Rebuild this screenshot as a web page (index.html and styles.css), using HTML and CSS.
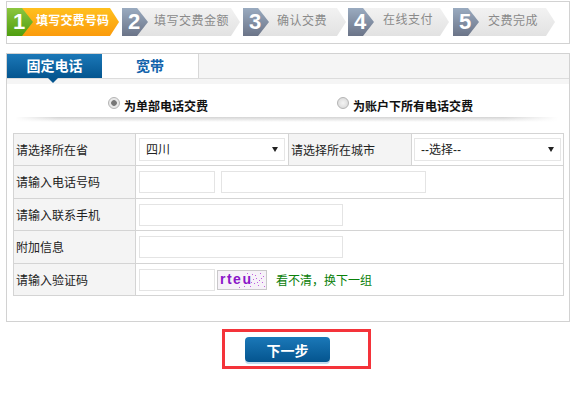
FILE: index.html
```html
<!DOCTYPE html>
<html>
  <head>
    <meta charset="utf-8" />
    <title>交费</title>
    <link rel="stylesheet" href="styles.css">
  </head>
  <body>
    <div class="steps">
      <div class="step step-active step-1"><span class="step-num">1</span><span class="step-label">填写交费号码</span></div>
      <div class="step step-2"><span class="step-num">2</span><span class="step-label">填写交费金额</span></div>
      <div class="step step-3"><span class="step-num">3</span><span class="step-label">确认交费</span></div>
      <div class="step step-4"><span class="step-num">4</span><span class="step-label">在线支付</span></div>
      <div class="step step-5"><span class="step-num">5</span><span class="step-label">交费完成</span></div>
    </div>

    <div class="panel">
      <div class="tabs">
        <div class="tab tab-active">固定电话</div>
        <div class="tab">宽带</div>
      </div>

      <div class="radio-row">
        <label class="radio-item radio-first"><span class="radio radio-on"></span>为单部电话交费</label>
        <label class="radio-item radio-second"><span class="radio"></span>为账户下所有电话交费</label>
      </div>
      <div class="radio-shadow"></div>

      <table class="form-table">
        <tr>
          <td class="label col-a">请选择所在省</td>
          <td class="col-b">
            <div class="select-wrap"><select class="select"><option>四川</option></select></div>
          </td>
          <td class="label col-c">请选择所在城市</td>
          <td class="col-d">
            <div class="select-wrap"><select class="select"><option>--选择--</option></select></div>
          </td>
        </tr>
        <tr class="row-tall">
          <td class="label">请输入电话号码</td>
          <td colspan="3"><input class="input input-s"><input class="input input-m"></td>
        </tr>
        <tr>
          <td class="label">请输入联系手机</td>
          <td colspan="3"><input class="input input-l"></td>
        </tr>
        <tr class="row-tall">
          <td class="label">附加信息</td>
          <td colspan="3"><input class="input input-l"></td>
        </tr>
        <tr>
          <td class="label">请输入验证码</td>
          <td colspan="3">
            <div class="captcha-row">
              <input class="input input-s">
              <svg class="captcha" width="50" height="20" viewBox="0 0 50 20">
                <rect x="0.5" y="0.5" width="49" height="19" fill="#f6f2f8" stroke="#999" stroke-dasharray="1 1" />
                <text x="3" y="14" class="captcha-text">rteu</text>
                <g fill="#c060e0">
                  <rect x="35" y="4" width="1" height="1" /><rect x="39" y="8" width="1" height="1" />
                  <rect x="43" y="3" width="1" height="1" /><rect x="46" y="6" width="1" height="1" />
                  <rect x="37" y="13" width="1" height="1" /><rect x="41" y="15" width="1" height="1" />
                  <rect x="45" y="12" width="1" height="1" /><rect x="33" y="16" width="1" height="1" />
                  <rect x="42" y="10" width="1" height="1" /><rect x="47" y="16" width="1" height="1" />
                  <rect x="36" y="9" width="1" height="1" /><rect x="30" y="3" width="1" height="1" />
                  <rect x="38" y="5" width="1" height="1" /><rect x="44" y="8" width="1" height="1" />
                  <rect x="34" y="12" width="1" height="1" /><rect x="40" y="12" width="1" height="1" />
                  <rect x="27" y="16" width="1" height="1" /><rect x="22" y="17" width="1" height="1" />
                </g>
              </svg>
              <a class="refresh">看不清，换下一组</a>
            </div>
          </td>
        </tr>
      </table>
    </div>

    <div class="actions">
      <div class="highlight">
        <button class="next-btn">下一步</button>
      </div>
    </div>
  </body>
</html>
```

FILE: styles.css
```css
body {
  margin: 0;
  font-family: "Liberation Sans", "Noto Sans CJK SC", sans-serif;
  font-size: 12px;
  color: #222;
  background: #fff;
}

/* step bar */
.steps {
  display: flex;
  width: 564px;
  height: 43px;
  margin: 1px 0 0 6px;
  padding-top: 6px;
  box-sizing: border-box;
  border: 1px solid #d2d2d2;
}

.step {
  display: flex;
  height: 28px;
}
.step-1 { width: 112px; }
.step-2 { width: 118px; margin-left: 3px; }
.step-3 { width: 103px; margin-left: 3px; }
.step-4 { width: 101px; margin-left: 2px; }
.step-5 { width: 102px; margin-left: 4px; }

.step-num {
  position: relative;
  z-index: 1;
  flex: none;
  width: 26px;
  padding-right: 2px;
  box-sizing: border-box;
  text-align: center;
  font: bold 22px/28px "Liberation Sans", sans-serif;
  color: #fff;
  background: linear-gradient(#9aabc0, #6b7488);
  clip-path: polygon(0 0, 15px 0, 26px 50%, 15px 100%, 0 100%);
}

.step-label {
  flex: 1;
  margin-left: -14px;
  line-height: 27px;
  letter-spacing: 0.5px;
  color: #8a8a8a;
  background: linear-gradient(#f2f2f2, #e2e2e2);
  clip-path: polygon(0 0, calc(100% - 9px) 0, 100% 50%, calc(100% - 9px) 100%, 0 100%);
}
.step-2 .step-label { padding-left: 20px; }
.step-3 .step-label { padding-left: 22px; }
.step-4 .step-label { padding-left: 23px; line-height: 24px; }
.step-5 .step-label { padding-left: 23px; }

.step-active .step-num {
  background: linear-gradient(#8cc63f, #4f9e10);
}
.step-active .step-label {
  padding-left: 17px;
  letter-spacing: 0.2px;
  font-weight: bold;
  color: #fff;
  background: linear-gradient(#ffc01e, #fb9b0c);
}

/* tabbed panel */
.panel {
  width: 562px;
  height: 267px;
  margin: 9px 0 0 6px;
  border: 1px solid #d2d2d2;
}

.tabs {
  display: flex;
  height: 24px;
  background: #f5f5f5;
  border-bottom: 1px solid #dcdcdc;
}

.tab {
  position: relative;
  width: 96px;
  text-align: center;
  font-size: 14px;
  font-weight: bold;
  line-height: 25px;
  color: #1464ac;
  background: #fff;
  border-right: 1px solid #d8d8d8;
}

.tab-active {
  width: 95px;
  color: #fff;
  background: linear-gradient(#1b78b8, #04558f);
  border-right: 0;
}
.tab-active::after {
  content: "";
  position: absolute;
  left: 41px;
  top: 24px;
  border: 5px solid transparent;
  border-top-color: #04558f;
  border-bottom: 0;
}

.radio-row {
  display: flex;
  height: 38px;
  padding-top: 5px;
  box-sizing: border-box;
  background: linear-gradient(#f5f5f5 5px, #fff 5px);
  font-weight: bold;
  color: #111;
}

.radio-item {
  display: flex;
  align-items: center;
  padding-top: 10px;
}
.radio-first { margin-left: 101px; }
.radio-second { margin-left: 129px; }

.radio {
  width: 12px;
  height: 12px;
  margin: -6px 4px 0 0;
  box-sizing: border-box;
  border: 1px solid #b4b4b4;
  border-radius: 50%;
  background: radial-gradient(#f4f4f4, #d4d4d4);
}
.radio-on {
  background: radial-gradient(#777 35%, #e8e8e8 45%);
}

.radio-shadow {
  height: 5px;
  margin: 0 11px 0 8px;
  background:
    linear-gradient(90deg, #fff, transparent 8%, transparent 90%, #fff),
    linear-gradient(#d4d4d4, #fff);
}

.form-table {
  width: 551px;
  margin: 11px 0 0 6px;
  table-layout: fixed;
  border-collapse: collapse;
  border: 1px solid #d4d4d4;
}

.form-table td {
  height: 32px;
  padding: 0 3px;
  box-sizing: border-box;
  border: 1px solid #d4d4d4;
}
.form-table .row-tall td {
  height: 33px;
}

.form-table .label {
  padding: 2px 2px 0;
  background: #f4f4f4;
  line-height: 16px;
}

.col-a { width: 122px; }
.col-b { width: 153px; }
.col-c { width: 123px; }
.form-table .col-d { padding: 0 2px; }

.select-wrap {
  position: relative;
}
.select-wrap::after {
  content: "";
  position: absolute;
  right: 7px;
  top: 9px;
  border: 3px solid transparent;
  border-top: 5px solid #222;
  border-bottom: 0;
}

.select {
  display: block;
  width: 100%;
  height: 23px;
  padding: 0 6px;
  box-sizing: border-box;
  font: inherit;
  color: #222;
  background: #fff;
  border: 1px solid #e6e6e6;
  border-radius: 0;
  appearance: none;
}

.input {
  display: inline-block;
  height: 22px;
  margin: 0;
  padding: 0 4px;
  box-sizing: border-box;
  vertical-align: middle;
  background: #fff;
  border: 1px solid #e4e4e4;
}
.input-s { width: 76px; }
.input-m { width: 205px; margin-left: 6px; }
.input-l { width: 204px; }

.captcha-row {
  display: flex;
  align-items: center;
}

.captcha {
  margin: 0 9px 0 2px;
}
.captcha-text {
  font: bold 14px "Liberation Sans", sans-serif;
  letter-spacing: 1.5px;
  fill: #8a16c8;
}

.refresh {
  color: #0a800a;
}

/* next button */
.actions {
  display: flex;
  margin: 7px 0 0 222px;
}

.highlight {
  width: 149px;
  height: 40px;
  padding: 5px 0 0 20px;
  box-sizing: border-box;
  border: 3px solid #f4333a;
}

.next-btn {
  display: block;
  width: 85px;
  height: 25px;
  padding: 0;
  font: bold 14px "Liberation Sans", "Noto Sans CJK SC", sans-serif;
  color: #fff;
  background: linear-gradient(#1b78b8, #04558f);
  border: 0;
  border-radius: 4px;
  box-shadow: 0 2px 0 #c3dcef;
}
```
